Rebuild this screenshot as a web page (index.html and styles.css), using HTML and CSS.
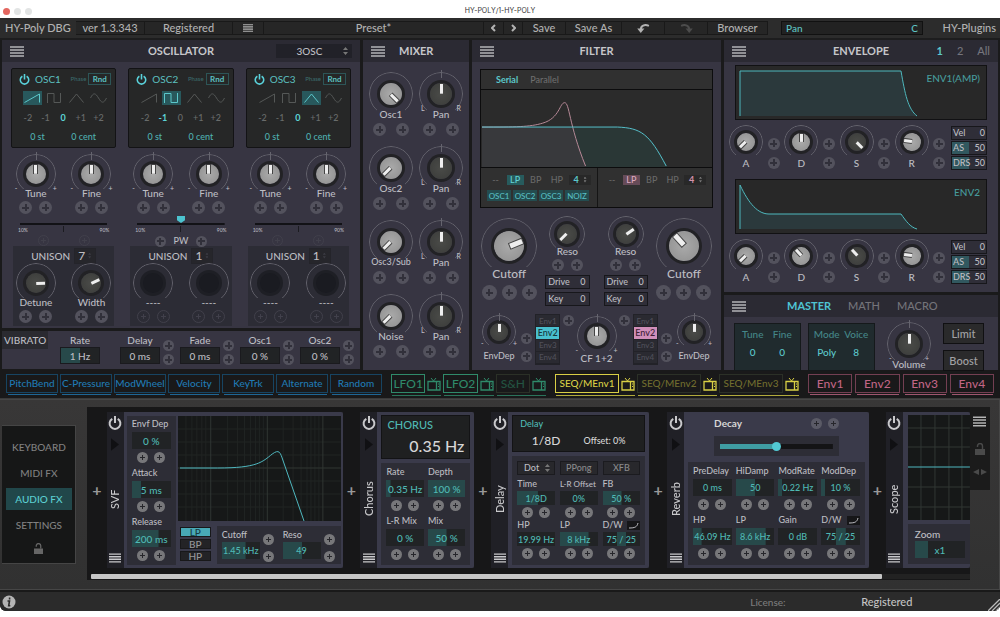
FILE: index.html
```html
<!DOCTYPE html>
<html lang="en">
<head>
    <meta charset="UTF-8">
    <meta name="viewport" content="width=device-width, initial-scale=1.0">
    <title>HY-POLY/1-HY-POLY</title>
    <link rel="stylesheet" href="styles.css">
</head>
<body>

<!-- shared icons -->
<svg class="defs" width="0" height="0">
    <symbol id="menu" viewBox="0 0 14 11"><path d="M0 1h14M0 4h14M0 7h14M0 10h14" stroke="currentColor" stroke-width="1.6"/></symbol>
    <symbol id="power" viewBox="0 0 14 14"><path d="M4.300 2.800a5.400 5.400 0 1 0 5.400 0M7 0v7" fill="none" stroke="currentColor" stroke-width="2"/></symbol>
    <symbol id="saw" viewBox="0 0 18 12"><path d="M1 10.500L16 2v8.500" fill="none" stroke="currentColor"/></symbol>
    <symbol id="square" viewBox="0 0 18 12"><path d="M2 11V1.500h6.500v9h6.500V1" fill="none" stroke="currentColor"/></symbol>
    <symbol id="tri" viewBox="0 0 18 12"><path d="M2 10.500L9 2l7 8.500" fill="none" stroke="currentColor"/></symbol>
    <symbol id="sine" viewBox="0 0 18 12"><path d="M1 6C4 0 6 1 9 6s5 6 8 0" fill="none" stroke="currentColor"/></symbol>
    <symbol id="tv" viewBox="0 0 14 14"><path d="M1 4.500h12v8.500H1zM9.500 4.500v8.500" fill="none" stroke="currentColor" stroke-width="1.300"/><path d="M4 1l2.500 3L9 1M11 7h1M11 9.500h1" fill="none" stroke="currentColor"/></symbol>
    <symbol id="lock" viewBox="0 0 10 12"><path d="M0 6h10v6H0z" fill="currentColor"/><path d="M2.500 4V3a2.500 2.500 0 0 1 5 0v3" fill="none" stroke="currentColor" stroke-width="1.400"/></symbol>
    <symbol id="play" viewBox="0 0 9 14"><path d="M0 0l9 7-9 7z" fill="currentColor"/></symbol>
    <symbol id="undo" viewBox="0 0 14 10"><path d="M13 2C8 0 4 2 4 6" fill="none" stroke="currentColor" stroke-width="2.200"/><path d="M0 5h8l-4 5z" fill="currentColor"/></symbol>
    <symbol id="curve" viewBox="0 0 13 9"><path d="M2 7c6 0 8-1 9-5" fill="none" stroke="currentColor"/></symbol>
</svg>

<header class="titlebar">
    <span class="lights"><i></i><i></i><i></i></span>
    <span>HY-POLY/1-HY-POLY</span>
</header>

<div class="app">
    <nav class="toolbar">
        <span class="brand">HY-Poly DBG</span>
        <button>ver 1.3.343</button>
        <button>Registered</button>
        <button aria-label="Menu"><svg class="icon-menu"><use href="#menu"/></svg></button>
        <button>Preset*</button>
        <button aria-label="Previous"><svg class="chev" viewBox="0 0 5 8"><path d="M4 1L1 4l3 3"/></svg></button>
        <button aria-label="Next"><svg class="chev" viewBox="0 0 5 8"><path d="M1 1l3 3-3 3"/></svg></button>
        <button>Save</button>
        <button>Save As</button>
        <button aria-label="Undo"><svg class="icon-undo"><use href="#undo"/></svg></button>
        <button aria-label="Redo" disabled><svg class="icon-undo redo"><use href="#undo"/></svg></button>
        <button>Browser</button>
        <span class="readout"><span>Pan</span><span>C</span></span>
        <span class="brand right">HY-Plugins</span>
    </nav>

    <main class="synth">
        <div class="column">
            <section class="panel osc-panel">
                <header class="head">
                    <button class="burger" aria-label="Oscillator menu"><svg class="icon-menu"><use href="#menu"/></svg></button>
                    <h2>OSCILLATOR</h2>
                    <span class="drop wide"><select aria-label="Oscillator type"><option>3OSC</option></select></span>
                </header>
                <div class="oscs">
                    <div class="osc">
                        <div class="screen">
                            <div class="screen-top"><button aria-label="OSC1 power"><svg class="icon-power"><use href="#power"/></svg></button><b>OSC1</b><small>Phase</small><button class="rnd">Rnd</button></div>
                            <div class="waves">
                                <button class="on" aria-label="Saw"><svg><use href="#saw"/></svg></button>
                                <button aria-label="Square"><svg><use href="#square"/></svg></button>
                                <button aria-label="Triangle"><svg><use href="#tri"/></svg></button>
                                <button aria-label="Sine"><svg><use href="#sine"/></svg></button>
                            </div>
                            <div class="octaves"><button>-2</button><button>-1</button><button class="on">0</button><button>+1</button><button>+2</button></div>
                            <div class="pitch"><span>0 st</span><span>0 cent</span></div>
                        </div>
                        <div class="pair">
                            <div><label class="knob tick"><span class="dial"><input type="range"><span class="ends"><i>-</i><i>+</i></span></span>Tune</label><div class="mods"><button class="mod" aria-label="Add"></button><button class="mod" aria-label="Add"></button></div></div>
                            <div><label class="knob tick"><span class="dial"><input type="range"><span class="ends"><i>-</i><i>+</i></span></span>Fine</label><div class="mods"><button class="mod" aria-label="Add"></button><button class="mod" aria-label="Add"></button></div></div>
                        </div>
                        <input type="range" class="pw" aria-label="Pulse width" disabled>
                        <div class="scale"><span>10%</span><i></i><span>90%</span></div>
                        <div class="pw-row"><button class="mod off" aria-label="Add"></button><span></span><button class="mod off" aria-label="Add"></button></div>
                        <div class="unison">
                            <label class="voices">UNISON <span class="drop"><select><option>7</option></select></span></label>
                            <div class="pair">
                                <div><label class="knob dark"><span class="dial"><input type="range" style="--turn: 88deg"></span>Detune</label><div class="mods"><button class="mod" aria-label="Add"></button><button class="mod" aria-label="Add"></button></div></div>
                                <div><label class="knob dark"><span class="dial"><input type="range" style="--turn: 65deg"></span>Width</label><div class="mods"><button class="mod" aria-label="Add"></button><button class="mod" aria-label="Add"></button></div></div>
                            </div>
                        </div>
                    </div>
                    <div class="osc">
                        <div class="screen">
                            <div class="screen-top"><button aria-label="OSC2 power"><svg class="icon-power"><use href="#power"/></svg></button><b>OSC2</b><small>Phase</small><button class="rnd">Rnd</button></div>
                            <div class="waves">
                                <button aria-label="Saw"><svg><use href="#saw"/></svg></button>
                                <button class="on" aria-label="Square"><svg><use href="#square"/></svg></button>
                                <button aria-label="Triangle"><svg><use href="#tri"/></svg></button>
                                <button aria-label="Sine"><svg><use href="#sine"/></svg></button>
                            </div>
                            <div class="octaves"><button>-2</button><button class="on">-1</button><button>0</button><button>+1</button><button>+2</button></div>
                            <div class="pitch"><span>0 st</span><span>0 cent</span></div>
                        </div>
                        <div class="pair">
                            <div><label class="knob tick"><span class="dial"><input type="range"><span class="ends"><i>-</i><i>+</i></span></span>Tune</label><div class="mods"><button class="mod" aria-label="Add"></button><button class="mod" aria-label="Add"></button></div></div>
                            <div><label class="knob tick"><span class="dial"><input type="range"><span class="ends"><i>-</i><i>+</i></span></span>Fine</label><div class="mods"><button class="mod" aria-label="Add"></button><button class="mod" aria-label="Add"></button></div></div>
                        </div>
                        <input type="range" class="pw" id="pw2">
                        <div class="scale"><span>10%</span><i></i><span>90%</span></div>
                        <div class="pw-row"><button class="mod" aria-label="Add"></button><label for="pw2">PW</label><button class="mod" aria-label="Add"></button></div>
                        <div class="unison">
                            <label class="voices">UNISON <span class="drop"><select><option>1</option></select></span></label>
                            <div class="pair">
                                <div><label class="knob empty"><span class="dial"><input type="range" disabled></span>----</label><div class="mods"><button class="mod off" aria-label="Add"></button><button class="mod off" aria-label="Add"></button></div></div>
                                <div><label class="knob empty"><span class="dial"><input type="range" disabled></span>----</label><div class="mods"><button class="mod off" aria-label="Add"></button><button class="mod off" aria-label="Add"></button></div></div>
                            </div>
                        </div>
                    </div>
                    <div class="osc">
                        <div class="screen">
                            <div class="screen-top"><button aria-label="OSC3 power"><svg class="icon-power"><use href="#power"/></svg></button><b>OSC3</b><small>Phase</small><button class="rnd">Rnd</button></div>
                            <div class="waves">
                                <button aria-label="Saw"><svg><use href="#saw"/></svg></button>
                                <button aria-label="Square"><svg><use href="#square"/></svg></button>
                                <button class="on" aria-label="Triangle"><svg><use href="#tri"/></svg></button>
                                <button aria-label="Sine"><svg><use href="#sine"/></svg></button>
                            </div>
                            <div class="octaves"><button>-2</button><button>-1</button><button class="on">0</button><button>+1</button><button>+2</button></div>
                            <div class="pitch"><span>0 st</span><span>0 cent</span></div>
                        </div>
                        <div class="pair">
                            <div><label class="knob tick"><span class="dial"><input type="range"><span class="ends"><i>-</i><i>+</i></span></span>Tune</label><div class="mods"><button class="mod" aria-label="Add"></button><button class="mod" aria-label="Add"></button></div></div>
                            <div><label class="knob tick"><span class="dial"><input type="range"><span class="ends"><i>-</i><i>+</i></span></span>Fine</label><div class="mods"><button class="mod" aria-label="Add"></button><button class="mod" aria-label="Add"></button></div></div>
                        </div>
                        <input type="range" class="pw" aria-label="Pulse width" disabled>
                        <div class="scale"><span>10%</span><i></i><span>90%</span></div>
                        <div class="pw-row"><button class="mod off" aria-label="Add"></button><span></span><button class="mod off" aria-label="Add"></button></div>
                        <div class="unison">
                            <label class="voices">UNISON <span class="drop"><select><option>1</option></select></span></label>
                            <div class="pair">
                                <div><label class="knob empty"><span class="dial"><input type="range" disabled></span>----</label><div class="mods"><button class="mod off" aria-label="Add"></button><button class="mod off" aria-label="Add"></button></div></div>
                                <div><label class="knob empty"><span class="dial"><input type="range" disabled></span>----</label><div class="mods"><button class="mod off" aria-label="Add"></button><button class="mod off" aria-label="Add"></button></div></div>
                            </div>
                        </div>
                    </div>
                </div>
            </section>
            <section class="panel vibrato">
                <h3>VIBRATO</h3>
                <div class="vib"><label>Rate<input type="text" class="value" value="1 Hz" style="--fill: 50%"></label></div>
                <div class="vib"><label>Delay<input type="text" class="value" value="0 ms"></label><div class="mods tall"><button class="mod" aria-label="Add"></button><button class="mod" aria-label="Add"></button></div></div>
                <div class="vib"><label>Fade<input type="text" class="value" value="0 ms"></label><div class="mods tall"><button class="mod" aria-label="Add"></button><button class="mod" aria-label="Add"></button></div></div>
                <div class="vib"><label>Osc1<input type="text" class="value" value="0 %"></label><div class="mods tall"><button class="mod" aria-label="Add"></button><button class="mod" aria-label="Add"></button></div></div>
                <div class="vib"><label>Osc2<input type="text" class="value" value="0 %"></label><div class="mods tall"><button class="mod" aria-label="Add"></button><button class="mod" aria-label="Add"></button></div></div>
            </section>
        </div>

        <section class="panel">
            <header class="head mixer-head">
                <button class="burger" aria-label="Mixer menu"><svg class="icon-menu"><use href="#menu"/></svg></button>
                <h2>MIXER</h2>
            </header>
            <div class="mixer">
                <div><label class="knob big"><span class="dial"><input type="range" style="--turn: 135deg"></span>Osc1</label><div class="mods"><button class="mod" aria-label="Add"></button><button class="mod" aria-label="Add"></button></div></div>
                <div><label class="knob big dark tick"><span class="dial"><input type="range"><span class="ends"><i>L</i><i>R</i></span></span>Pan</label><div class="mods"><button class="mod" aria-label="Add"></button><button class="mod" aria-label="Add"></button></div></div>
                <div><label class="knob big"><span class="dial"><input type="range" style="--turn: 225deg"></span>Osc2</label><div class="mods"><button class="mod" aria-label="Add"></button><button class="mod" aria-label="Add"></button></div></div>
                <div><label class="knob big dark tick"><span class="dial"><input type="range"><span class="ends"><i>L</i><i>R</i></span></span>Pan</label><div class="mods"><button class="mod" aria-label="Add"></button><button class="mod" aria-label="Add"></button></div></div>
                <div><label class="knob big"><span class="dial"><input type="range" style="--turn: 225deg"></span><span class="long">Osc3/Sub</span></label><div class="mods"><button class="mod" aria-label="Add"></button><button class="mod" aria-label="Add"></button></div></div>
                <div><label class="knob big dark tick"><span class="dial"><input type="range"><span class="ends"><i>L</i><i>R</i></span></span>Pan</label><div class="mods"><button class="mod" aria-label="Add"></button><button class="mod" aria-label="Add"></button></div></div>
                <div><label class="knob big"><span class="dial"><input type="range" style="--turn: 225deg"></span>Noise</label><div class="mods"><button class="mod" aria-label="Add"></button><button class="mod" aria-label="Add"></button></div></div>
                <div><label class="knob big dark tick"><span class="dial"><input type="range"><span class="ends"><i>L</i><i>R</i></span></span>Pan</label><div class="mods"><button class="mod" aria-label="Add"></button><button class="mod" aria-label="Add"></button></div></div>
            </div>
        </section>

        <section class="panel">
            <header class="head">
                <button class="burger" aria-label="Filter menu"><svg class="icon-menu"><use href="#menu"/></svg></button>
                <h2>FILTER</h2>
            </header>
            <div class="filter">
                <div class="filter-screen">
                    <div class="routing"><button class="on">Serial</button><button>Parallel</button></div>
                    <svg class="graph" viewBox="0 0 232 79" preserveAspectRatio="none">
                        <path d="M1 38H137C161 39 169 45 187 78V79H1z" fill="#2a3736"/>
                        <path d="M1 38H90L106 79H1z" fill="#38393c"/>
                        <path d="M1 38C35 38 49 38 62 34C79 29 79 13 84 13C89 13 88 35 105 78" fill="none" stroke="#b88a98"/>
                        <path d="M1 38H137C161 39 169 45 186 78" fill="none" stroke="#56c0cb"/>
                    </svg>
                    <div class="types">
                        <div>
                            <div class="modes"><button>--</button><button class="on">LP</button><button>BP</button><button>HP</button><span class="drop"><select aria-label="Filter 1 poles"><option>4</option></select></span></div>
                            <div class="chips"><button>OSC1</button><button>OSC2</button><button>OSC3</button><button>NOIZ</button></div>
                        </div>
                        <div class="pink">
                            <div class="modes"><button>--</button><button class="on">LP</button><button>BP</button><button>HP</button><span class="drop"><select aria-label="Filter 2 poles"><option>4</option></select></span></div>
                        </div>
                    </div>
                </div>
                <div class="cutoffs">
                    <div class="cut"><label class="knob huge"><span class="dial"><input type="range" style="--turn: 68deg"></span>Cutoff</label><div class="mods"><button class="mod" aria-label="Add"></button><button class="mod" aria-label="Add"></button><button class="mod" aria-label="Add"></button></div></div>
                    <div class="reso">
                        <label class="knob small dark"><span class="dial"><input type="range" style="--turn: 225deg"></span>Reso</label><div class="mods"><button class="mod" aria-label="Add"></button><button class="mod" aria-label="Add"></button></div>
                        <label class="cell">Drive<input type="text" value="0"></label>
                        <label class="cell">Key<input type="text" value="0"></label>
                    </div>
                    <div class="reso">
                        <label class="knob small dark"><span class="dial"><input type="range" style="--turn: 55deg"></span>Reso</label><div class="mods"><button class="mod" aria-label="Add"></button><button class="mod" aria-label="Add"></button></div>
                        <label class="cell">Drive<input type="text" value="0"></label>
                        <label class="cell">Key<input type="text" value="0"></label>
                    </div>
                    <div class="cut"><label class="knob huge"><span class="dial"><input type="range" style="--turn: -42deg"></span>Cutoff</label><div class="mods"><button class="mod" aria-label="Add"></button><button class="mod" aria-label="Add"></button><button class="mod" aria-label="Add"></button></div></div>
                </div>
                <div class="depths">
                    <label class="knob mini dark tick dep"><span class="dial"><input type="range"><span class="ends"><i>-</i><i>+</i></span></span>EnvDep</label>
                    <div class="mods tall far"><button class="mod" aria-label="Add"></button><button class="mod" aria-label="Add"></button></div>
                    <div class="envs"><button>Env1</button><button class="on">Env2</button><button>Env3</button><button>Env4</button></div>
                    <button class="mod" aria-label="Add"></button>
                    <label class="knob tick"><span class="dial"><input type="range"><span class="ends"><i>-</i><i>+</i></span></span>CF 1+2</label>
                    <button class="mod" aria-label="Add"></button>
                    <div class="envs pink"><button>Env1</button><button class="on">Env2</button><button>Env3</button><button>Env4</button></div>
                    <div class="mods tall far"><button class="mod" aria-label="Add"></button><button class="mod" aria-label="Add"></button></div>
                    <label class="knob mini dark tick dep"><span class="dial"><input type="range"><span class="ends"><i>-</i><i>+</i></span></span>EnvDep</label>
                </div>
            </div>
        </section>

        <div class="column">
            <section class="panel env-panel">
                <header class="head">
                    <button class="burger" aria-label="Envelope menu"><svg class="icon-menu"><use href="#menu"/></svg></button>
                    <h2>ENVELOPE</h2>
                    <div class="pages"><button class="on">1</button><button>2</button><button>All</button></div>
                </header>
                <div class="env">
                    <div class="env-screen">
                        <svg viewBox="0 0 250 53" preserveAspectRatio="none"><path d="M4 50V5H165C169 28 172 43 181 50z" fill="#2b393c"/><path d="M4 50V5H165C169 28 172 43 181 50" fill="none" stroke="#4fb8bd"/></svg>
                        <span>ENV1(AMP)</span>
                    </div>
                    <div class="adsr">
                        <label class="knob mini"><span class="dial"><input type="range" style="--turn: 225deg"></span>A</label><div class="mods tall far"><button class="mod" aria-label="Add"></button><button class="mod" aria-label="Add"></button></div>
                        <label class="knob mini"><span class="dial"><input type="range"></span>D</label><div class="mods tall far"><button class="mod" aria-label="Add"></button><button class="mod" aria-label="Add"></button></div>
                        <label class="knob mini dark"><span class="dial"><input type="range" style="--turn: 135deg"></span>S</label><div class="mods tall far"><button class="mod" aria-label="Add"></button><button class="mod" aria-label="Add"></button></div>
                        <label class="knob mini"><span class="dial"><input type="range" style="--turn: -82deg"></span>R</label><div class="mods tall far"><button class="mod" aria-label="Add"></button><button class="mod" aria-label="Add"></button></div>
                        <div class="sens"><label class="cell">Vel<input type="text" value="0"></label><label class="cell half">AS<input type="text" value="50"></label><label class="cell half">DRS<input type="text" value="50"></label></div>
                    </div>
                </div>
                <div class="env">
                    <div class="env-screen">
                        <svg viewBox="0 0 250 53" preserveAspectRatio="none"><path d="M4 49V5C13 24 22 34 33 34H165C170 41 174 47 181 49z" fill="#2b393c"/><path d="M4 49V5C13 24 22 34 33 34H165C170 41 174 47 181 49" fill="none" stroke="#4fb8bd"/></svg>
                        <span>ENV2</span>
                    </div>
                    <div class="adsr">
                        <label class="knob mini"><span class="dial"><input type="range" style="--turn: 225deg"></span>A</label><div class="mods tall far"><button class="mod" aria-label="Add"></button><button class="mod" aria-label="Add"></button></div>
                        <label class="knob mini"><span class="dial"><input type="range" style="--turn: -42deg"></span>D</label><div class="mods tall far"><button class="mod" aria-label="Add"></button><button class="mod" aria-label="Add"></button></div>
                        <label class="knob mini dark"><span class="dial"><input type="range" style="--turn: -42deg"></span>S</label><div class="mods tall far"><button class="mod" aria-label="Add"></button><button class="mod" aria-label="Add"></button></div>
                        <label class="knob mini"><span class="dial"><input type="range" style="--turn: -82deg"></span>R</label><div class="mods tall far"><button class="mod" aria-label="Add"></button><button class="mod" aria-label="Add"></button></div>
                        <div class="sens"><label class="cell">Vel<input type="text" value="0"></label><label class="cell half">AS<input type="text" value="50"></label><label class="cell half">DRS<input type="text" value="50"></label></div>
                    </div>
                </div>
            </section>
            <section class="panel">
                <header class="head master-head">
                    <button class="burger" aria-label="Master menu"><svg class="icon-menu"><use href="#menu"/></svg></button>
                    <button class="tab on">MASTER</button><button class="tab">MATH</button><button class="tab">MACRO</button>
                </header>
                <div class="master">
                    <dl><div><dt>Tune</dt><dd>0</dd></div><div><dt>Fine</dt><dd>0</dd></div></dl>
                    <dl><div><dt>Mode</dt><dd>Poly</dd></div><div><dt>Voice</dt><dd>8</dd></div></dl>
                    <label class="knob big dark tick vol"><span class="dial"><input type="range"><span class="ends"><i>-</i><i>+</i></span></span>Volume</label>
                    <div class="switches"><button>Limit</button><button>Boost</button></div>
                </div>
            </section>
        </div>
    </main>

    <nav class="sources">
        <div class="group blue"><button>PitchBend</button><button>C-Pressure</button><button>ModWheel</button><button>Velocity</button><button>KeyTrk</button><button>Alternate</button><button>Random</button></div>
        <div class="group green">
            <span><button>LFO1</button><svg><use href="#tv"/></svg></span>
            <span><button>LFO2</button><svg><use href="#tv"/></svg></span>
            <span class="dim"><button>S&amp;H</button><svg><use href="#tv"/></svg></span>
        </div>
        <div class="group yellow">
            <span><button>SEQ/MEnv1</button><svg><use href="#tv"/></svg></span>
            <span class="dim"><button>SEQ/MEnv2</button><svg><use href="#tv"/></svg></span>
            <span class="dim"><button>SEQ/MEnv3</button><svg><use href="#tv"/></svg></span>
        </div>
        <div class="group rose"><button>Env1</button><button>Env2</button><button>Env3</button><button>Env4</button></div>
    </nav>

    <div class="bottom">
        <nav class="views">
            <button>KEYBOARD</button>
            <button>MIDI FX</button>
            <button class="on">AUDIO FX</button>
            <button>SETTINGS</button>
            <svg><use href="#lock"/></svg>
        </nav>
        <div class="rack">
            <div class="chain">
                <button class="add" aria-label="Insert effect">+</button>
                <section class="fx">
                    <div class="spine"><button aria-label="SVF power"><svg class="icon-power"><use href="#power"/></svg></button><svg class="play"><use href="#play"/></svg><h4>SVF</h4><button aria-label="SVF menu"><svg class="icon-menu"><use href="#menu"/></svg></button></div>
                    <div class="fx-body svf">
                        <div class="params one">
                            <div class="param"><label>Envf Dep<input type="text" class="value" value="0 %"></label><div class="mods"><button class="mod" aria-label="Add"></button><button class="mod" aria-label="Add"></button></div></div>
                            <div class="param"><label>Attack<input type="text" class="value" value="5 ms" style="--fill: 23%"></label><div class="mods"><button class="mod" aria-label="Add"></button><button class="mod" aria-label="Add"></button></div></div>
                            <div class="param"><label>Release<input type="text" class="value" value="200 ms" style="--fill: 68%"></label><div class="mods"><button class="mod" aria-label="Add"></button><button class="mod" aria-label="Add"></button></div></div>
                        </div>
                        <div class="svf-main">
                            <svg class="plot" viewBox="0 0 164 105" preserveAspectRatio="none">
                                <path class="grid" d="M8 0V105M14 0V105M19 0V105M24 0V105M28 0V105M50 0V105M60 0V105M67 0V105M73 0V105M78 0V105M82 0V105M86 0V105M106 0V105M116 0V105M124 0V105M130 0V105M134 0V105M138 0V105M142 0V105M0 13H164M0 26H164M0 39H164M0 65H164M0 78H164M0 91H164"/>
                                <path class="grid strong" d="M33 0V105M90 0V105M146 0V105M0 52H164"/>
                                <path d="M2 52H40C80 52 85 46 95 38C102 33 103 36 106 45L127 105" fill="none" stroke="#4fb8c0"/>
                            </svg>
                            <div class="svf-foot">
                                <div class="types3"><button class="on">LP</button><button>BP</button><button>HP</button></div>
                                <div class="svf-params">
                                    <div class="vib"><label>Cutoff<input type="text" class="value" value="1.45 kHz" style="--fill: 62%"></label><div class="mods tall"><button class="mod" aria-label="Add"></button><button class="mod" aria-label="Add"></button></div></div>
                                    <div class="vib"><label>Reso<input type="text" class="value" value="49" style="--fill: 50%"></label><div class="mods tall"><button class="mod" aria-label="Add"></button><button class="mod" aria-label="Add"></button></div></div>
                                </div>
                            </div>
                        </div>
                    </div>
                </section>
                <button class="add" aria-label="Insert effect">+</button>
                <section class="fx">
                    <div class="spine"><button aria-label="Chorus power"><svg class="icon-power"><use href="#power"/></svg></button><svg class="play"><use href="#play"/></svg><h4>Chorus</h4><button aria-label="Chorus menu"><svg class="icon-menu"><use href="#menu"/></svg></button></div>
                    <div class="fx-body">
                        <div class="lcd chorus-lcd"><b>CHORUS</b><span>0.35 Hz</span></div>
                        <div class="params two">
                            <div class="param"><label>Rate<input type="text" class="value" value="0.35 Hz" style="--fill: 12%"></label><div class="mods"><button class="mod" aria-label="Add"></button><button class="mod" aria-label="Add"></button></div></div>
                            <div class="param"><label>Depth<input type="text" class="value" value="100 %" style="--fill: 100%"></label><div class="mods"><button class="mod" aria-label="Add"></button><button class="mod" aria-label="Add"></button></div></div>
                            <div class="param"><label>L-R Mix<input type="text" class="value" value="0 %"></label><div class="mods"><button class="mod" aria-label="Add"></button><button class="mod" aria-label="Add"></button></div></div>
                            <div class="param"><label>Mix<input type="text" class="value" value="50 %" style="--fill: 50%"></label><div class="mods"><button class="mod" aria-label="Add"></button><button class="mod" aria-label="Add"></button></div></div>
                        </div>
                    </div>
                </section>
                <button class="add" aria-label="Insert effect">+</button>
                <section class="fx">
                    <div class="spine"><button aria-label="Delay power"><svg class="icon-power"><use href="#power"/></svg></button><svg class="play"><use href="#play"/></svg><h4>Delay</h4><button aria-label="Delay menu"><svg class="icon-menu"><use href="#menu"/></svg></button></div>
                    <div class="fx-body">
                        <div class="lcd delay-lcd"><b>Delay</b><p><span>1/8D</span><small>Offset: 0%</small></p></div>
                        <div class="params three">
                            <span class="drop"><select aria-label="Delay note"><option>Dot</option></select></span><button class="flat">PPong</button><button class="flat">XFB</button>
                            <div class="param"><label>Time<input type="text" class="value" value="1/8D" style="--fill: 55%"></label><div class="mods"><button class="mod" aria-label="Add"></button><button class="mod" aria-label="Add"></button></div></div>
                            <div class="param"><label><span class="tiny">L-R Offset</span><input type="text" class="value" value="0%"></label><div class="mods"><button class="mod" aria-label="Add"></button><button class="mod" aria-label="Add"></button></div></div>
                            <div class="param"><label>FB<input type="text" class="value" value="50 %" style="--fill: 50%"></label><div class="mods"><button class="mod" aria-label="Add"></button><button class="mod" aria-label="Add"></button></div></div>
                            <div class="param"><label>HP<input type="text" class="value" value="19.99 Hz"></label><div class="mods"><button class="mod" aria-label="Add"></button><button class="mod" aria-label="Add"></button></div></div>
                            <div class="param"><label>LP<input type="text" class="value" value="8 kHz" style="--fill: 75%"></label><div class="mods"><button class="mod" aria-label="Add"></button><button class="mod" aria-label="Add"></button></div></div>
                            <div class="param"><label><span class="dw">D/W <svg><use href="#curve"/></svg></span><input type="text" class="value mid" value="75 / 25"></label><div class="mods"><button class="mod" aria-label="Add"></button><button class="mod" aria-label="Add"></button></div></div>
                        </div>
                    </div>
                </section>
                <button class="add" aria-label="Insert effect">+</button>
                <section class="fx">
                    <div class="spine"><button aria-label="Reverb power"><svg class="icon-power"><use href="#power"/></svg></button><svg class="play"><use href="#play"/></svg><h4>Reverb</h4><button aria-label="Reverb menu"><svg class="icon-menu"><use href="#menu"/></svg></button></div>
                    <div class="fx-body">
                        <div class="decay">
                            <div><label for="decay">Decay</label><div class="mods"><button class="mod" aria-label="Add"></button><button class="mod" aria-label="Add"></button></div></div>
                            <span><input type="range" id="decay" value="50"></span>
                        </div>
                        <div class="params four">
                            <div class="param"><label>PreDelay<input type="text" class="value" value="0 ms"></label><div class="mods"><button class="mod" aria-label="Add"></button><button class="mod" aria-label="Add"></button></div></div>
                            <div class="param"><label>HiDamp<input type="text" class="value" value="50" style="--fill: 50%"></label><div class="mods"><button class="mod" aria-label="Add"></button><button class="mod" aria-label="Add"></button></div></div>
                            <div class="param"><label>ModRate<input type="text" class="value" value="0.22 Hz" style="--fill: 11%"></label><div class="mods"><button class="mod" aria-label="Add"></button><button class="mod" aria-label="Add"></button></div></div>
                            <div class="param"><label>ModDep<input type="text" class="value" value="10 %" style="--fill: 11%"></label><div class="mods"><button class="mod" aria-label="Add"></button><button class="mod" aria-label="Add"></button></div></div>
                            <div class="param"><label>HP<input type="text" class="value" value="46.09 Hz" style="--fill: 22%"></label><div class="mods"><button class="mod" aria-label="Add"></button><button class="mod" aria-label="Add"></button></div></div>
                            <div class="param"><label>LP<input type="text" class="value" value="8.6 kHz" style="--fill: 78%"></label><div class="mods"><button class="mod" aria-label="Add"></button><button class="mod" aria-label="Add"></button></div></div>
                            <div class="param"><label>Gain<input type="text" class="value" value="0 dB"></label><div class="mods"><button class="mod" aria-label="Add"></button><button class="mod" aria-label="Add"></button></div></div>
                            <div class="param"><label><span class="dw">D/W <svg><use href="#curve"/></svg></span><input type="text" class="value mid" value="75 / 25"></label><div class="mods"><button class="mod" aria-label="Add"></button><button class="mod" aria-label="Add"></button></div></div>
                        </div>
                    </div>
                </section>
                <button class="add" aria-label="Insert effect">+</button>
                <section class="fx cut-off">
                    <div class="spine"><button aria-label="Scope power"><svg class="icon-power"><use href="#power"/></svg></button><svg class="play"><use href="#play"/></svg><h4>Scope</h4><button aria-label="Scope menu"><svg class="icon-menu"><use href="#menu"/></svg></button></div>
                    <div class="fx-body scope">
                        <svg class="plot" viewBox="0 0 62 105" preserveAspectRatio="none">
                            <path class="grid strong" d="M13 0V105M27 0V105M41 0V105M54 0V105M0 13H62M0 32H62M0 72H62M0 92H62"/>
                            <path d="M0 52H62" stroke="#4fb8c0"/>
                        </svg>
                        <div class="zoom"><label>Zoom<input type="text" class="value" value="x1" style="--fill: 26%"></label></div>
                    </div>
                </section>
            </div>
            <div class="scroll"><i></i></div>
        </div>
        <aside class="rack-side">
            <button aria-label="Rack menu"><svg class="icon-menu"><use href="#menu"/></svg></button>
            <svg class="lock"><use href="#lock"/></svg>
            <svg class="arrows" viewBox="0 0 14 6"><path d="M6 0v6L0 3zM8 0v6l6-3z"/></svg>
        </aside>
    </div>

    <footer class="status">
        <svg class="info" viewBox="0 0 14 14"><circle cx="7" cy="7" r="6.500" fill="#b4b4b4"/><path d="M7.600 2.500v2M5.500 6h2l-.8 4.800h1.600" fill="none" stroke="#2b2b2b" stroke-width="1.600"/></svg>
        <span class="license">License:</span>
        <strong>Registered</strong>
        <svg class="grip" viewBox="0 0 12 12"><path d="M0 12L12 0M4 12l8-8M8 12l4-4" stroke="#bbb" stroke-width="1.300"/></svg>
    </footer>
</div>

</body>
</html>
```

FILE: styles.css
```css
* {
    box-sizing: border-box;
}
body {
    margin: 0;
    background: #fff;
    color: #bdbdc2;
    font: 500 10px/14px Lato, "Noto Sans", sans-serif;
}
button, input, select {
    font: inherit;
    color: inherit;
    background: none;
    border: 0;
    padding: 0;
    margin: 0;
    min-width: 0;
    border-radius: 0;
    white-space: nowrap;
    appearance: none;
}
button {
    cursor: pointer;
}
h2, h3, h4, dl, dd, p {
    margin: 0;
}
i {
    font-style: normal;
}
svg {
    display: block;
}
.defs {
    position: absolute;
}

/* window title */
.titlebar {
    display: grid;
    grid-template-columns: 1fr auto 1fr;
    align-items: center;
    height: 18px;
    padding: 4px 3px 0;
    color: #333;
    font: 7px/10px Inter, sans-serif;
}
.lights {
    display: flex;
    gap: 4px;
}
.lights i {
    width: 7px;
    height: 7px;
    border-radius: 50%;
    background: #e2e4e4;
}
.lights i:first-child {
    background: #e3665f;
}

/* frame and toolbar */
.app {
    background: #1a1a1b;
    border-radius: 0 0 6px 6px;
    overflow: hidden;
}
.toolbar {
    display: grid;
    grid-template-columns: 71fr 69fr 88fr 31fr 220fr 20fr 19fr 43fr 56fr 43fr 43fr 60fr 155fr 73fr;
    align-items: center;
    height: 22px;
    padding: 0 4px 0 5px;
    background: #2c2c2c;
    border-bottom: 2px solid #1d1d1e;
    font-size: 11px;
}
.toolbar button {
    display: flex;
    justify-content: center;
    align-items: center;
    height: 14px;
    background: #262626;
    border: 1px solid #191919;
    border-left-width: 0;
    white-space: nowrap;
    color: #b2b2b2;
}
.toolbar button:disabled {
    color: #4c4c4c;
}
.brand {
    white-space: nowrap;
    color: #b2b2b2;
}
.right {
    text-align: right;
}
.chev {
    width: 5px;
    height: 8px;
    fill: none;
    stroke: currentColor;
    stroke-width: 2;
}
.icon-menu {
    width: 14px;
    height: 11px;
}
.toolbar .icon-menu {
    width: 10px;
    height: 8px;
}
.icon-undo {
    width: 13px;
    height: 9px;
}
.redo {
    transform: scaleX(-1);
}
.readout {
    display: flex;
    justify-content: space-between;
    height: 14px;
    margin-left: 13px;
    padding: 0 4px;
    background: #222;
    border: 1px solid #111;
    color: #5fc4c4;
    font-size: 10px;
    line-height: 12px;
}

/* panels */
.synth {
    display: grid;
    grid-template-columns: 358fr 106fr 249fr 274fr;
    gap: 3px;
    padding: 0 2px;
}
.synth > *, .column > * {
    min-width: 0;
}
.column {
    display: flex;
    flex-direction: column;
    gap: 3px;
}
.panel {
    background: #373542;
}
.head {
    display: grid;
    grid-template-columns: minmax(0, 1fr) auto minmax(0, 1fr);
    align-items: center;
    height: 22px;
    padding: 0 8px;
    background: #2b2a33;
}
.head h2 {
    font-size: 11px;
    font-weight: 700;
    color: #c6c6ca;
}
.burger {
    width: 14px;
    color: #b4b4b8;
}
.mixer-head {
    grid-template-columns: 28px auto;
    justify-content: start;
}
.drop {
    display: grid;
    grid-template-columns: 1fr 5px;
    align-items: center;
    padding-right: 4px;
    background: #26262b;
}
.drop select {
    width: 100%;
    text-align-last: center;
}
.drop::after {
    content: "";
    width: 5px;
    height: 8px;
    background: #777;
    clip-path: polygon(50% 0, 100% 38%, 0 38%, 0 62%, 100% 62%, 50% 100%, 0 62%, 0 38%);
}
.wide {
    justify-self: end;
    width: 76px;
    height: 14px;
    background: #212128;
    line-height: 12px;
}

/* rotary knobs */
.knob {
    --ring: 38px;
    --cap: 20px;
    --pull: -7px;
    display: flex;
    flex-direction: column;
    align-items: center;
    white-space: nowrap;
    font-size: 10px;
}
.dial {
    position: relative;
    display: grid;
    place-items: center;
    width: var(--ring);
    height: var(--ring);
    margin-bottom: var(--pull);
}
.dial::before {
    content: "";
    grid-area: 1 / 1;
    width: 100%;
    height: 100%;
    border: 1px solid #65646e;
    border-radius: 50%;
    mask: conic-gradient(#000 140deg, transparent 0 220deg, #000 0);
}
.tick .dial::after {
    content: "";
    position: absolute;
    top: -3px;
    left: 50%;
    width: 1px;
    height: 8px;
    background: #65646e;
}
.dial input {
    grid-area: 1 / 1;
    width: var(--cap);
    height: var(--cap);
    border-radius: 50%;
    background: linear-gradient(#eee, #eee) center 1px / 3px 44% no-repeat,
        linear-gradient(#444, #444) center 0 / 5px 50% no-repeat,
        radial-gradient(#aaa, #8e8e8e);
    box-shadow: 0 0 0 3px #222225;
    transform: rotate(var(--turn, 0deg));
}
.dial input::-webkit-slider-thumb {
    appearance: none;
    width: 0;
}
.dark .dial input {
    background: linear-gradient(#eee, #eee) center 1px / 3px 44% no-repeat,
        radial-gradient(#4a4b48, #3a3b39);
}
.empty .dial input {
    background: #1a1b21;
    box-shadow: 0 0 0 3px #1e1f25;
}
.ends {
    position: absolute;
    bottom: 1px;
    left: -2px;
    right: -2px;
    display: flex;
    justify-content: space-between;
    font-size: 7px;
    line-height: 8px;
}
.big {
    --ring: 42px;
    --cap: 22px;
    --pull: -8px;
}
.big .ends {
    bottom: 3px;
    left: 1px;
    right: 1px;
}
.huge {
    --ring: 54px;
    --cap: 30px;
    --pull: -6px;
    font-size: 12px;
}
.huge input {
    background-size: 5px 44%, 7px 50%, auto;
}
.small {
    --ring: 34px;
    --cap: 20px;
    --pull: -7px;
    font-size: 10px;
}
.mini {
    --ring: 32px;
    --cap: 18px;
    --pull: -2px;
    font-size: 10px;
}
.long {
    font-size: 9px;
}

/* modulation slots */
.mods {
    display: flex;
    justify-content: center;
    gap: 7px;
}
.tall {
    flex-direction: column;
    gap: 2px;
}
.far {
    gap: 7px;
}
.mod {
    flex: none;
    width: 13px;
    height: 13px;
    border: 0;
    border-radius: 50%;
    background: linear-gradient(#31303a, #31303a) center / 7px 2px no-repeat,
        linear-gradient(#31303a, #31303a) center / 2px 7px no-repeat,
        #53525d;
}
.off {
    border: 1px solid #41404b;
    background: linear-gradient(#41404b, #41404b) center / 5px 1px no-repeat,
        linear-gradient(#41404b, #41404b) center / 1px 5px no-repeat;
}

/* oscillators */
.oscs {
    display: grid;
    grid-template-columns: repeat(3, minmax(0, 1fr));
    gap: 12px;
    padding: 6px 9px 2px;
}
.screen {
    height: 80px;
    margin-bottom: 7px;
    padding: 4px 4px 0 7px;
    background: #262727;
    border: 1px solid #131315;
    border-radius: 2px;
}
.screen-top {
    display: flex;
    align-items: center;
    height: 12px;
    color: #5cc0c0;
}
.screen-top b {
    margin: 0 auto 0 5px;
    font-weight: 400;
    font-size: 10px;
}
.screen-top small {
    font-size: 6px;
    color: #3b6a6b;
}
.screen .icon-power {
    width: 11px;
    height: 11px;
    color: #5ad3dc;
}
.rnd {
    width: 23px;
    height: 12px;
    margin-left: 2px;
    border: 1px solid #2d5557;
    font-size: 8px;
    font-weight: 700;
    line-height: 10px;
}
.waves {
    display: flex;
    justify-content: space-between;
    margin: 6px 3px 6px 4px;
}
.waves button {
    padding: 1px 0;
    color: #555857;
}
.waves svg {
    width: 19px;
    height: 12px;
}
.waves .on {
    background: #28585c;
    color: #5cc8cb;
}
.octaves {
    display: grid;
    grid-template-columns: repeat(5, 1fr);
    color: #696c6b;
    margin-right: 4px;
    font-size: 9px;
}
.octaves .on {
    color: #5cd3d6;
    font-weight: 700;
}
.pitch {
    display: grid;
    grid-template-columns: 2fr 3fr;
    margin-top: 5px;
    text-align: center;
    color: #4fb0b0;
    font-size: 9px;
}
.pair {
    display: grid;
    grid-template-columns: 1fr 1fr;
    margin: 0 -3px;
}
.pair .mods {
    margin-top: 1px;
}
.pw {
    display: block;
    width: calc(100% - 18px);
    height: 12px;
    margin: 4px 9px 0;
    background: linear-gradient(#121216, #121216) center / 100% 2px no-repeat;
}
.pw::-webkit-slider-thumb {
    appearance: none;
    width: 8px;
    height: 7px;
    margin-top: -8px;
    background: #4cc3cf;
    clip-path: polygon(0 0, 100% 0, 100% 60%, 50% 100%, 0 60%);
}
.pw:disabled::-webkit-slider-thumb {
    visibility: hidden;
}
.scale {
    display: grid;
    grid-template-columns: 1fr auto 1fr;
    height: 8px;
    margin: -4px 7px 0;
    font-size: 5px;
    line-height: 8px;
}
.scale i {
    width: 1px;
    height: 6px;
    background: #1b1b20;
}
.scale span:last-child {
    text-align: right;
}
.pw-row {
    display: grid;
    grid-template-columns: 11px 24px 11px;
    gap: 3px;
    justify-content: center;
    justify-items: center;
    align-items: center;
    height: 12px;
    font-size: 9px;
}
.pw-row .mod {
    width: 11px;
    height: 11px;
}
.unison {
    margin: 0 2px;
    padding: 2px 0 3px;
    background: #2c2c35;
}
.unison .pair {
    margin: 1px -5px 0;
}
.voices {
    display: flex;
    justify-content: center;
    align-items: center;
    gap: 4px;
    height: 15px;
    font-size: 10px;
}
.voices .drop {
    width: 22px;
    padding-right: 2px;
    font-size: 12px;
    border: 1px solid #24242a;
}
.voices .drop::after, .modes .drop::after {
    width: 3px;
    height: 6px;
}
.voices .drop::after {
    background: #3c3c44;
}

/* values */
.value {
    width: 100%;
    height: 17px;
    background: linear-gradient(#27494a, #27494a) left / var(--fill, 0%) 100% no-repeat #212325;
    text-align: center;
}
.vibrato {
    display: grid;
    grid-template-columns: 58px repeat(5, minmax(0, 1fr));
    height: 38px;
}
.vibrato h3 {
    justify-self: start;
    height: 18px;
    padding: 2px 2px 0;
    background: #2a2a30;
    font-size: 10px;
    font-weight: 500;
}
.vib {
    display: grid;
    grid-template-columns: minmax(0, 1fr) 13px;
    gap: 3px;
    padding: 2px 4px 0 0;
}
.vib label {
    text-align: center;
}
.vib .value {
    display: block;
    border: 1px solid #1a1a1e;
}
.vib .mods {
    padding-top: 3px;
}
.vib .mod {
    width: 11px;
    height: 11px;
}
.vib .tall {
    gap: 3px;
}

/* mixer */
.mixer {
    display: grid;
    grid-template-columns: 1fr 1fr;
    row-gap: 11px;
    padding: 11px 3px 0;
}
.mixer .mods {
    gap: 10px;
    margin-top: 2px;
}

/* filter */
.filter {
    padding: 7px 8px 0;
}
.filter-screen {
    background: #2b2b2b;
    border: 1px solid #0c0c0d;
}
.routing {
    display: flex;
    gap: 12px;
    height: 19px;
    padding-left: 15px;
    background: #303030;
    color: #6d6d6d;
    font-size: 9px;
}
.routing .on {
    color: #5cc8cb;
    font-weight: 700;
}
.graph {
    width: 100%;
    height: 79px;
    border: solid #0c0c0d;
    border-width: 1px 0;
}
.types {
    display: grid;
    grid-template-columns: 1fr 1fr;
    height: 39px;
    background: #303030;
}
.types > div {
    padding: 4px 6px 0;
}
.types > div + div {
    border-left: 1px solid #151515;
}
.modes {
    display: grid;
    grid-template-columns: 17px 17px 19px 18px 22px;
    align-items: center;
    justify-content: space-between;
    height: 15px;
    font-size: 9px;
    line-height: 10px;
    color: #686868;
}
.modes .on {
    background: #275b5d;
    color: #62d2d4;
}
.modes .drop {
    padding-right: 2px;
    background: #282828;
    color: #5cc8cb;
    font-weight: 700;
}
.pink .modes .on {
    background: #664b58;
    color: #dba9be;
}
.pink .modes .drop {
    color: #d493ad;
}
.chips {
    display: flex;
    gap: 2px;
    margin-top: 3px;
}
.chips button {
    width: 24px;
    height: 11px;
    background: #244c4f;
    color: #57bfc3;
    font-size: 8px;
    line-height: 10px;
}
.cutoffs {
    display: grid;
    grid-template-columns: repeat(4, minmax(0, 1fr));
    height: 102px;
    padding-top: 9px;
}
.cut {
    padding-top: 2px;
}
.cut .mods {
    gap: 5px;
    margin-top: 4px;
}
.cut .mod {
    width: 15px;
    height: 15px;
}
.reso {
    padding: 0 7px;
}
.reso .mods {
    margin: 1px 0 4px;
}
.reso .mod {
    width: 12px;
    height: 12px;
}
.cell {
    display: flex;
    justify-content: space-between;
    height: 14px;
    margin-bottom: 3px;
    padding: 0 3px 0 2px;
    background: #2f2e38;
    border: 1px solid #17171b;
    font-size: 9px;
    line-height: 12px;
}
.cell input {
    width: 12px;
    text-align: right;
}
.depths {
    display: flex;
    justify-content: space-between;
    height: 58px;
    padding: 4px 0 0;
}
.depths .mod {
    width: 11px;
    height: 11px;
}
.depths > .mod {
    margin-top: 1px;
}
.depths .far {
    padding-top: 12px;
}
.depths .knob {
    --pull: -4px;
    width: 38px;
    padding-top: 3px;
}
.depths .dep {
    --pull: 1px;
    padding-top: 2px;
    font-size: 9px;
}
.envs {
    display: flex;
    flex-direction: column;
    width: 25px;
    height: 51px;
    background: #2a2a31;
    border: 1px solid #222228;
}
.envs button {
    flex: 1;
    border-bottom: 1px solid #222228;
    color: #50505a;
    font-size: 8px;
    line-height: 8px;
}
.envs .on {
    background: #49bfce;
    color: #16363b;
    font-size: 9px;
}
.envs.pink .on {
    background: #d08fb9;
    color: #3e2034;
}

/* envelopes */
.env-panel {
    height: 252px;
}
.env {
    height: 114px;
    padding: 3px 11px 0;
}
.env-screen {
    display: grid;
    height: 55px;
    background: #282828;
    border: 1px solid #111113;
}
.env-screen svg, .env-screen span {
    grid-area: 1 / 1;
}
.env-screen svg {
    width: 100%;
    height: 53px;
}
.env-screen span {
    justify-self: end;
    padding: 5px 6px 0 0;
    color: #469b9b;
}
.pages {
    display: flex;
    justify-content: flex-end;
    gap: 14px;
    font-size: 11px;
    color: #75757d;
}
.pages .on {
    color: #5cc8cb;
    font-weight: 700;
}
.adsr {
    display: flex;
    justify-content: space-between;
    margin: 6px 0 0 -5px;
}
.adsr .far {
    padding-top: 9px;
}
.adsr .far .mod {
    width: 12px;
    height: 12px;
}
.sens {
    width: 36px;
}
.sens .cell {
    margin-bottom: 1px;
    padding: 0 1px;
}
.sens .half {
    background: linear-gradient(#31585f, #31585f) left / 50% 100% no-repeat #2f2e38;
}

/* master */
.master-head {
    display: flex;
}
.tab {
    margin-left: 17px;
    font-size: 11px;
    color: #74747a;
}
.burger + .tab {
    margin-left: 41px;
}
.tab.on {
    color: #4fc5d3;
    font-weight: 700;
}
.master {
    display: grid;
    grid-template-columns: 67fr 67fr 54fr 41fr;
    gap: 7px;
    height: 53px;
    padding: 6px 14px 5px 10px;
}
.master dl {
    display: grid;
    grid-template-columns: 1fr 1fr;
    padding: 3px;
    background: #202b2e;
    border: 1px solid #15191b;
    text-align: center;
}
.master dt {
    margin-bottom: 4px;
    color: #458789;
}
.master dd {
    color: #5cc8cb;
}
.switches {
    display: grid;
    gap: 6px;
}
.switches button {
    background: #2a2a2b;
    border: 1px solid #101012;
    color: #a2a2a5;
    font-size: 11px;
    line-height: 12px;
}

/* modulation sources */
.sources {
    display: grid;
    grid-template-columns: 376fr 155fr 244fr 186fr;
    gap: 9px;
    padding: 4px 6px 2px;
    background: #19191a;
    border-bottom: 1px solid #3a3a3a;
}
.group {
    display: flex;
    gap: 2px;
    font-size: 10px;
}
.group button {
    flex: 1 1 0;
    height: 19px;
    border: 1px solid currentColor;
    line-height: 15px;
}
.group > button, .group span {
    position: relative;
    margin-bottom: 3px;
}
.group > button::after, .group span::after {
    content: "";
    position: absolute;
    left: 1px;
    right: 0;
    bottom: -3px;
    height: 1px;
    background: currentColor;
    opacity: 0.8;
}
.group span {
    display: flex;
    flex: 1 1 0;
    align-items: center;
    gap: 2px;
}
.group span svg {
    width: 14px;
    height: 14px;
}
.blue {
    color: #17537c;
}
.blue button {
    border-color: #174462;
    color: #2079b4;
}
.green {
    color: #2f8a6a;
    font-size: 12px;
}
.green .dim button {
    color: #235341;
}
.yellow {
    color: #d8cf45;
    font-size: 10px;
}
.yellow .dim button {
    color: #706c2e;
}
.dim button {
    border-color: #2b3027;
}
.rose {
    gap: 3px;
    color: #c06585;
    font-size: 12px;
}
.rose button {
    border-color: #733f52;
}

/* lower section */
.bottom {
    display: grid;
    grid-template-columns: 73fr 884fr 20fr;
    column-gap: 0;
    align-items: start;
    height: 191px;
    padding: 7px 9px 0 2px;
    background: linear-gradient(#383737, #313131);
    border: solid #464646;
    border-width: 1px 1px 1px 0;
}
.views {
    display: grid;
    justify-items: stretch;
    gap: 4px;
    margin-top: 18px;
    padding: 10px 3px 6px 4px;
    background: #161717;
    border: 1px solid #454545;
    border-left: 0;
    font-size: 10px;
    color: #808080;
}
.views button {
    height: 22px;
}
.views .on {
    background: #21474a;
    color: #5ccfd2;
}
.views svg {
    justify-self: center;
    width: 9px;
    height: 11px;
    margin: 3px 0;
    color: #666;
}
.rack {
    min-width: 0;
    margin-left: 11px;
    padding: 5px 0 1px;
    background: #171718;
}
.chain {
    display: grid;
    grid-template-columns: 20fr 236fr 18fr 114fr 17fr 158fr 18fr 202fr 17fr 84fr;
    height: 156px;
    overflow: hidden;
}
.add {
    color: #999;
    font-size: 16px;
    font-weight: 700;
}
.fx {
    display: grid;
    grid-template-columns: 17px minmax(0, 1fr);
    min-width: 0;
    background: #202026;
}
.spine {
    display: flex;
    flex-direction: column;
    align-items: center;
    padding: 4px 0 5px;
    color: #c9c9cc;
}
.spine .icon-power {
    width: 14px;
    height: 14px;
}
.play {
    width: 8px;
    height: 13px;
    margin-top: 8px;
    color: #101013;
}
.spine h4 {
    display: flex;
    align-items: center;
    justify-content: center;
    flex: 1;
    padding-top: 6px;
    writing-mode: vertical-rl;
    transform: rotate(180deg);
    font-size: 11px;
    font-weight: 500;
}
.spine .icon-menu {
    width: 12px;
    height: 10px;
}
.fx-body {
    display: flex;
    flex-direction: column;
    gap: 4px;
    min-width: 0;
    padding: 3px 4px;
    background: #3a3a4a;
    border-radius: 0 2px 2px 0;
}
.fx .value {
    display: block;
    border: 0;
    color: #4fb9b4;
}
.fx .mods {
    gap: 6px;
}
.fx .mod {
    width: 11px;
    height: 11px;
    background: linear-gradient(#26262b, #26262b) center / 5px 1px no-repeat,
        linear-gradient(#26262b, #26262b) center / 1px 5px no-repeat,
        #77777a;
}
.params {
    display: grid;
    flex: 1;
    align-content: start;
    gap: 4px;
    padding: 3px 5px 0;
    background: #2d2d36;
    font-size: 9px;
}
.params label {
    display: block;
    white-space: nowrap;
    line-height: 12px;
}
.params .value {
    margin: 2px 0 3px;
    font-size: 10px;
}
.one {
    flex: none;
    width: 49px;
    padding: 2px 5px 0;
}
.one .param, .two .param, .four .param {
    height: 45px;
}
.two {
    grid-template-columns: 1fr 1fr;
}
.three {
    grid-template-columns: 1fr 1fr 1fr;
    gap: 3px 5px;
    padding-top: 5px;
}
.params.three .value {
    height: 14px;
    margin: 1px 0 2px;
    font-size: 9px;
}
.three .param {
    height: 38px;
}
.three .drop, .flat {
    height: 14px;
    border: 1px solid #1b1b1f;
    line-height: 12px;
    background: #28282c;
}
.flat {
    color: #8a8a8d;
}
.tiny {
    font-size: 8px;
}
.four {
    grid-template-columns: repeat(4, minmax(0, 1fr));
}
.params.four .value {
    font-size: 9px;
}
.params .mid {
    background: linear-gradient(#27494a, #27494a) center / 25% 100% no-repeat #212325;
}
.dw {
    display: flex;
    justify-content: space-between;
    align-items: center;
}
.dw svg {
    width: 13px;
    height: 9px;
    background: #161618;
}
.svf {
    flex-direction: row;
    gap: 2px;
    padding: 4px 2px 3px 3px;
}
.svf-main {
    flex: 1;
    min-width: 0;
}
.plot {
    width: 100%;
    height: 105px;
    background: #161818;
}
.grid {
    fill: none;
    stroke: #202423;
}
.strong {
    stroke: #303633;
}
.svf-foot {
    display: grid;
    grid-template-columns: 31px minmax(0, 1fr);
    gap: 6px;
    padding: 5px 0 0 2px;
}
.types3 {
    display: grid;
    align-content: start;
    gap: 2px;
    padding-top: 1px;
}
.types3 button {
    height: 10px;
    background: #232326;
    border: 1px solid #18181a;
    color: #96969a;
    line-height: 8px;
}
.types3 .on {
    background: #48a9b6;
    color: #173b41;
}
.svf-params {
    display: grid;
    grid-template-columns: 1fr 1fr;
    gap: 3px;
    padding: 0 0 0 5px;
    background: #2d2d36;
    height: 38px;
}
.svf-params label {
    text-align: left;
    font-size: 9px;
}
.svf-params .value {
    font-size: 9px;
}
.lcd {
    background: #1f2021;
    border: 1px solid #131315;
}
.lcd b {
    display: block;
    color: #4fb9b4;
    font-weight: 500;
}
.lcd span, .lcd small {
    color: #d6d6d6;
}
.chorus-lcd {
    height: 44px;
    padding: 2px 5px 0;
}
.chorus-lcd b {
    font-size: 11px;
}
.chorus-lcd span {
    display: block;
    text-align: right;
    font-size: 16px;
    line-height: 28px;
}
.delay-lcd {
    height: 37px;
    padding: 1px 7px 0;
}
.delay-lcd b {
    font-size: 9px;
}
.delay-lcd p {
    display: flex;
    justify-content: space-around;
    align-items: center;
    font-size: 12px;
    line-height: 20px;
}
.delay-lcd small {
    font-size: 9px;
}
.decay {
    height: 43px;
    padding: 1px 26px 0;
}
.decay div {
    display: flex;
    align-items: center;
    justify-content: space-between;
}
.decay label {
    font-weight: 700;
    color: #d6d6d6;
}
.decay .mod {
    background-color: #5a5a66;
}
.decay > span {
    display: block;
    height: 20px;
    margin-top: 6px;
    padding: 0 6px;
    background: #2d2d36;
}
.decay input {
    display: block;
    width: 100%;
    height: 20px;
    background: linear-gradient(to right, #3f9da3 50%, #141416 0) center / 100% 5px no-repeat;
}
.decay input::-webkit-slider-thumb {
    appearance: none;
    width: 9px;
    height: 9px;
    border-radius: 50%;
    background: #52cad4;
}
.scope {
    padding: 3px 0 0 5px;
}
.zoom {
    height: 40px;
    padding: 3px 5px 0 7px;
    background: #2d2d36;
}
.scroll {
    height: 5px;
    margin: 6px 0 0 4px;
    background: #222;
}
.scroll i {
    display: block;
    width: 90%;
    height: 5px;
    border-radius: 1px;
    background: #c6c6c6;
}
.rack-side {
    display: grid;
    justify-items: center;
    align-content: start;
    gap: 22px;
    height: 83px;
    padding-top: 9px;
    background: #1b1b1b;
    color: #4a4a4a;
}
.rack-side button {
    color: #b4b4b4;
}
.rack-side .icon-menu {
    width: 13px;
    height: 11px;
}
.lock {
    width: 10px;
    height: 12px;
    margin-top: -6px;
}
.arrows {
    width: 14px;
    height: 6px;
    margin-top: -8px;
    fill: currentColor;
}

/* status bar */
.status {
    display: grid;
    grid-template-columns: 749fr 111fr 127fr 12px;
    align-items: center;
    height: 21px;
    padding-left: 2px;
    background: #2b2b2b;
    border-top: 2px solid #191919;
    font-size: 11px;
}
.info {
    width: 14px;
    height: 14px;
}
.license {
    font-size: 10px;
    color: #7c7c7c;
}
.status strong {
    font-weight: 500;
    color: #c4c4c4;
}
.grip {
    align-self: end;
    width: 12px;
    height: 12px;
}
```
